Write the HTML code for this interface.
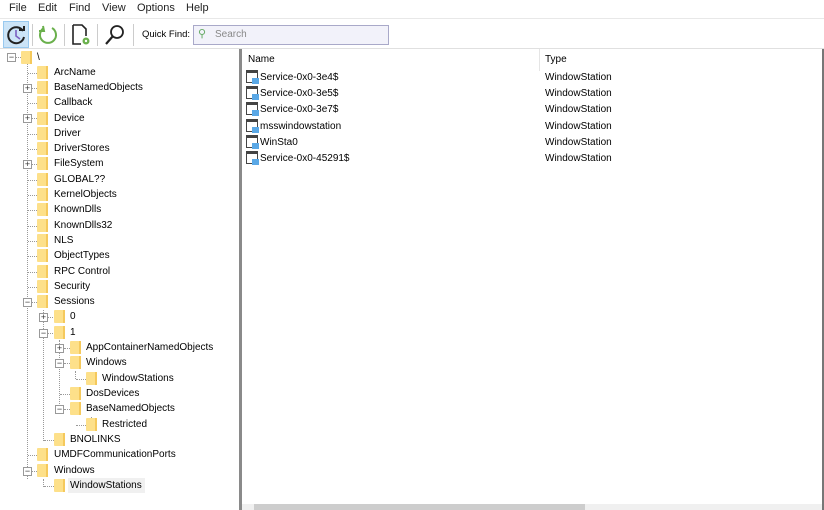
<!DOCTYPE html>
<html><head><style>
*{margin:0;padding:0;box-sizing:border-box}
body{width:824px;height:510px;overflow:hidden;background:#fff;font-family:"Liberation Sans",sans-serif;font-size:10px;color:#000;position:relative}
.menu{position:absolute;top:0;left:0;width:824px;height:18px;background:#fff}
.menu span{position:absolute;top:2px;color:#222;font-size:11px}
.tb{position:absolute;top:18px;left:0;width:824px;height:31px;background:#fff;border-top:1px solid #e8e8e8;border-bottom:1px solid #e0e0e0}
.sep{position:absolute;top:5px;width:1px;height:22px;background:#ccc}
.search{position:absolute;left:193px;top:6px;width:196px;height:20px;border:1px solid #a9a9c9;background:#f2f2fa}
.tree{position:absolute;left:0;top:49px;width:239px;height:461px;background:#fff}
.split{position:absolute;left:239px;top:49px;width:3px;height:461px;background:#8a8a8a}
.r{position:absolute;height:15px;line-height:15px;white-space:nowrap;font-size:10px}
.f{position:absolute;width:11px;height:13px;margin-top:1px;background:#fde08a;border-radius:1px}
.f:after{content:"";position:absolute;right:0;bottom:0;width:2px;height:13px;background:#f5c95c}
.hl{position:absolute;border-top:1px dotted #999;height:0}
.vl{position:absolute;border-left:1px dotted #999;width:0}
.bx{position:absolute;width:9px;height:9px;border:1px solid #999;background:#fff;font-size:9px;line-height:6px;text-align:center;color:#333}
.list{position:absolute;left:242px;top:49px;width:580px;height:461px;background:#fff}
.rb{position:absolute;left:822px;top:49px;width:2px;height:461px;background:#777}
.li{position:absolute;left:4px;height:16px;line-height:16px;font-size:10px}
.ic{display:inline-block;vertical-align:-3px;width:12px;height:13px;border:1.5px solid #444;border-top-width:3px;margin-right:2px;position:relative;background:#fff}
.ic:after{content:"";position:absolute;right:-2px;bottom:-2px;width:7px;height:6px;background:#5aa8e6}
.ty{position:absolute}
</style></head><body>
<div class="menu"><span style="left:9px">File</span><span style="left:38px">Edit</span><span style="left:69px">Find</span><span style="left:102px">View</span><span style="left:137px">Options</span><span style="left:186px">Help</span></div>
<div class="tb">
<div style="position:absolute;left:3px;top:2px;width:26px;height:27px;background:#cce4f7;border:1px solid #99c9ef"></div>
<svg style="position:absolute;left:5px;top:5px" width="22" height="22"><path d="M18 7 A8 8 0 1 0 19 13" fill="none" stroke="#222" stroke-width="2"/><path d="M14 6 L19 6 L19 2" fill="none" stroke="#222" stroke-width="2"/><path d="M11 6 L11 12 L15 15" fill="none" stroke="#7a5fc0" stroke-width="1.6"/></svg>
<div class="sep" style="left:32px"></div>
<svg style="position:absolute;left:37px;top:5px" width="22" height="22"><path d="M15 4 A8 8 0 1 1 7 4" fill="none" stroke="#6ab04c" stroke-width="2"/><path d="M6 2 L7 7 L2 7" fill="none" stroke="#6ab04c" stroke-width="2"/></svg>
<div class="sep" style="left:64px"></div>
<svg style="position:absolute;left:70px;top:4px" width="22" height="24"><path d="M3 2 L12 2 L16 6 L16 13 M3 2 L3 21 L11 21" fill="none" stroke="#222" stroke-width="1.6"/><circle cx="16" cy="18" r="3.5" fill="#6ab04c"/><circle cx="16" cy="18" r="1.2" fill="#fff"/></svg>
<div class="sep" style="left:97px"></div>
<svg style="position:absolute;left:103px;top:4px" width="24" height="24"><circle cx="14" cy="9" r="6" fill="none" stroke="#222" stroke-width="1.8"/><path d="M10 13 L3 21" stroke="#222" stroke-width="2.2"/></svg>
<div class="sep" style="left:133px"></div>
<span style="position:absolute;left:142px;top:10px;font-size:9.5px">Quick Find:</span>
<div class="search"><span style="position:absolute;left:4px;top:1px;color:#6a6;font-size:11px">⚲</span><span style="position:absolute;left:21px;top:3px;color:#888;font-size:10px">Search</span></div>
</div>
<div class="tree">
<div class="vl" style="left:27px;top:8px;height:422px"></div>
<div class="vl" style="left:43px;top:261px;height:131px"></div>
<div class="vl" style="left:59px;top:291px;height:70px"></div>
<div class="vl" style="left:75px;top:322px;height:8px"></div>
<div class="vl" style="left:91px;top:368px;height:8px"></div>
<div class="vl" style="left:43px;top:430px;height:8px"></div>
<div class="bx" style="left:7px;top:4px">−</div><div class="hl" style="left:16px;top:8px;width:5px"></div>
<div class="f" style="left:21px;top:1px"></div><div class="r" style="left:37px;top:1px">\</div>

<div class="hl" style="left:28px;top:24px;width:9px"></div><div class="f" style="left:37px;top:16px"></div><div class="r" style="left:54px;top:16px">ArcName</div>
<div class="bx" style="left:23px;top:35px">+</div><div class="hl" style="left:32px;top:39px;width:5px"></div><div class="f" style="left:37px;top:31px"></div><div class="r" style="left:54px;top:31px">BaseNamedObjects</div>
<div class="hl" style="left:28px;top:54px;width:9px"></div><div class="f" style="left:37px;top:46px"></div><div class="r" style="left:54px;top:46px">Callback</div>
<div class="bx" style="left:23px;top:65px">+</div><div class="hl" style="left:32px;top:69px;width:5px"></div><div class="f" style="left:37px;top:62px"></div><div class="r" style="left:54px;top:62px">Device</div>
<div class="hl" style="left:28px;top:85px;width:9px"></div><div class="f" style="left:37px;top:77px"></div><div class="r" style="left:54px;top:77px">Driver</div>
<div class="hl" style="left:28px;top:100px;width:9px"></div><div class="f" style="left:37px;top:92px"></div><div class="r" style="left:54px;top:92px">DriverStores</div>
<div class="bx" style="left:23px;top:111px">+</div><div class="hl" style="left:32px;top:115px;width:5px"></div><div class="f" style="left:37px;top:107px"></div><div class="r" style="left:54px;top:107px">FileSystem</div>
<div class="hl" style="left:28px;top:131px;width:9px"></div><div class="f" style="left:37px;top:123px"></div><div class="r" style="left:54px;top:123px">GLOBAL??</div>
<div class="hl" style="left:28px;top:146px;width:9px"></div><div class="f" style="left:37px;top:138px"></div><div class="r" style="left:54px;top:138px">KernelObjects</div>
<div class="hl" style="left:28px;top:161px;width:9px"></div><div class="f" style="left:37px;top:153px"></div><div class="r" style="left:54px;top:153px">KnownDlls</div>
<div class="hl" style="left:28px;top:177px;width:9px"></div><div class="f" style="left:37px;top:169px"></div><div class="r" style="left:54px;top:169px">KnownDlls32</div>
<div class="hl" style="left:28px;top:192px;width:9px"></div><div class="f" style="left:37px;top:184px"></div><div class="r" style="left:54px;top:184px">NLS</div>
<div class="hl" style="left:28px;top:207px;width:9px"></div><div class="f" style="left:37px;top:199px"></div><div class="r" style="left:54px;top:199px">ObjectTypes</div>
<div class="hl" style="left:28px;top:223px;width:9px"></div><div class="f" style="left:37px;top:215px"></div><div class="r" style="left:54px;top:215px">RPC Control</div>
<div class="hl" style="left:28px;top:238px;width:9px"></div><div class="f" style="left:37px;top:230px"></div><div class="r" style="left:54px;top:230px">Security</div>
<div class="bx" style="left:23px;top:249px">−</div><div class="hl" style="left:32px;top:253px;width:5px"></div><div class="f" style="left:37px;top:245px"></div><div class="r" style="left:54px;top:245px">Sessions</div>
<div class="bx" style="left:39px;top:264px">+</div><div class="hl" style="left:48px;top:268px;width:5px"></div><div class="f" style="left:54px;top:260px"></div><div class="r" style="left:70px;top:260px">0</div>
<div class="bx" style="left:39px;top:280px">−</div><div class="hl" style="left:48px;top:284px;width:5px"></div><div class="f" style="left:54px;top:276px"></div><div class="r" style="left:70px;top:276px">1</div>
<div class="bx" style="left:55px;top:295px">+</div><div class="hl" style="left:64px;top:299px;width:6px"></div><div class="f" style="left:70px;top:291px"></div><div class="r" style="left:86px;top:291px">AppContainerNamedObjects</div>
<div class="bx" style="left:55px;top:310px">−</div><div class="hl" style="left:64px;top:314px;width:6px"></div><div class="f" style="left:70px;top:306px"></div><div class="r" style="left:86px;top:306px">Windows</div>
<div class="hl" style="left:76px;top:330px;width:10px"></div><div class="f" style="left:86px;top:322px"></div><div class="r" style="left:102px;top:322px">WindowStations</div>
<div class="hl" style="left:60px;top:345px;width:10px"></div><div class="f" style="left:70px;top:337px"></div><div class="r" style="left:86px;top:337px">DosDevices</div>
<div class="bx" style="left:55px;top:356px">−</div><div class="hl" style="left:64px;top:360px;width:6px"></div><div class="f" style="left:70px;top:352px"></div><div class="r" style="left:86px;top:352px">BaseNamedObjects</div>
<div class="hl" style="left:76px;top:376px;width:10px"></div><div class="f" style="left:86px;top:368px"></div><div class="r" style="left:102px;top:368px">Restricted</div>
<div class="hl" style="left:44px;top:391px;width:10px"></div><div class="f" style="left:54px;top:383px"></div><div class="r" style="left:70px;top:383px">BNOLINKS</div>
<div class="hl" style="left:28px;top:406px;width:9px"></div><div class="f" style="left:37px;top:398px"></div><div class="r" style="left:54px;top:398px">UMDFCommunicationPorts</div>
<div class="bx" style="left:23px;top:418px">−</div><div class="hl" style="left:32px;top:422px;width:5px"></div><div class="f" style="left:37px;top:414px"></div><div class="r" style="left:54px;top:414px">Windows</div>
<div class="hl" style="left:44px;top:437px;width:10px"></div><div class="f" style="left:54px;top:429px"></div><div style="position:absolute;left:68px;top:429px;width:77px;height:15px;background:#f0f0f0"></div><div class="r" style="left:70px;top:429px">WindowStations</div>
</div>
<div class="split"></div>
<div class="list">
<div style="position:absolute;left:297px;top:0;width:1px;height:22px;background:#e5e5e5"></div>
<div class="r" style="left:6px;top:3px">Name</div><div class="r" style="left:303px;top:3px">Type</div>
<div class="li" style="top:21px"><span class="ic"></span>Service-0x0-3e4$<span class="ty" style="left:299px">WindowStation</span></div>
<div class="li" style="top:37px"><span class="ic"></span>Service-0x0-3e5$<span class="ty" style="left:299px">WindowStation</span></div>
<div class="li" style="top:53px"><span class="ic"></span>Service-0x0-3e7$<span class="ty" style="left:299px">WindowStation</span></div>
<div class="li" style="top:70px"><span class="ic"></span>msswindowstation<span class="ty" style="left:299px">WindowStation</span></div>
<div class="li" style="top:86px"><span class="ic"></span>WinSta0<span class="ty" style="left:299px">WindowStation</span></div>
<div class="li" style="top:102px"><span class="ic"></span>Service-0x0-45291$<span class="ty" style="left:299px">WindowStation</span></div>
<div style="position:absolute;left:0;top:455px;width:580px;height:6px;background:#f0f0f0"></div>
<div style="position:absolute;left:12px;top:455px;width:331px;height:6px;background:#cdcdcd"></div>
</div>
<div class="rb"></div>
</body></html>
